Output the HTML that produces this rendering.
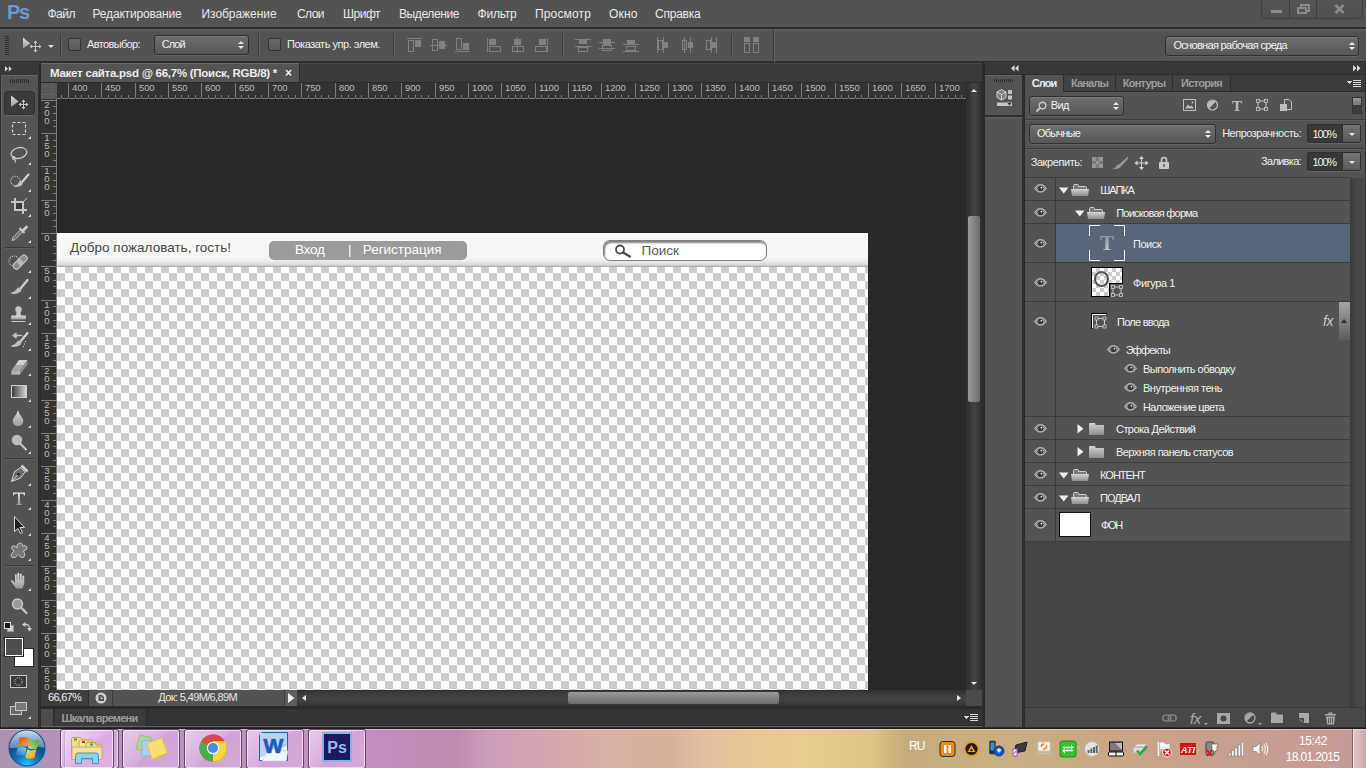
<!DOCTYPE html>
<html lang="ru">
<head>
<meta charset="utf-8">
<title>Макет сайта.psd</title>
<style>
*{box-sizing:border-box;margin:0;padding:0}
html,body{width:1366px;height:768px;overflow:hidden;background:#2c2c2c;font-family:"Liberation Sans","DejaVu Sans",sans-serif;font-size:11px;color:#e6e6e6}
.a{position:absolute}
svg{position:absolute;overflow:visible}
/* ---------- menubar ---------- */
#menubar{left:0;top:0;width:1366px;height:28px;background:#535353;border-bottom:1px solid #2e2e2e}
#menubar span{position:absolute;top:7px;font-size:12px;color:#e8e8e8;white-space:nowrap;letter-spacing:0}
#pslogo{position:absolute;left:7px;top:1px;font-size:20px;font-weight:bold;color:#6a9bd0;letter-spacing:-1.3px}
/* ---------- options bar ---------- */
#optbar{left:0;top:29px;width:1366px;height:33px;background:#535353;border-top:1px solid #626262;border-bottom:1px solid #2e2e2e}
.sep{position:absolute;width:1px;background:#3c3c3c;border-right:1px solid #626262;box-sizing:content-box}
.cb{position:absolute;width:13px;height:13px;border:1px solid #333;border-radius:2px;background:linear-gradient(#6a6a6a,#5a5a5a)}
.dd{position:absolute;border:1px solid #2f2f2f;border-radius:3px;background:linear-gradient(#6e6e6e,#575757);box-shadow:0 1px 0 #646464, inset 0 1px 0 #7c7c7c;color:#f0f0f0;white-space:nowrap}
.lbl{position:absolute;white-space:nowrap;color:#ededed}
/* ---------- toolbox ---------- */
#tooltop{left:0;top:62px;width:39px;height:13px;background:#383838}
#toolbox{left:1px;top:75px;width:37px;height:652px;background:#535353;box-shadow:inset 1px 0 0 #646464,inset 0 1px 0 #646464}
/* ---------- document window ---------- */
#docwin{left:41px;top:63px;width:941px;height:643px;background:#282828}
#tabstrip{left:0;top:0;width:941px;height:20px;background:#3a3a3a;border-bottom:1px solid #2a2a2a;box-shadow:inset 0 1px 0 #464646}
#doctab{left:0;top:0;width:259px;height:19px;background:#535353;border-right:1px solid #2e2e2e;box-shadow:inset 0 1px 0 #6a6a6a;color:#e8e8e8;font-weight:bold;font-size:12px}
#hruler{left:0;top:20px;width:925px;height:16px;background:#333}
#vruler{left:0;top:36px;width:16px;height:591px;background:#333}
#canvas{left:16px;top:36px;width:909px;height:591px;background:#282828;overflow:hidden}
#vscroll{left:925px;top:20px;width:16px;height:607px;background:#3a3a3a}
#statusbar{left:0;top:627px;width:941px;height:16px;background:#535353}

#doctitle{left:9px;top:4px;white-space:nowrap;font-size:11.5px;font-weight:bold;color:#ececec}
#docx{left:244px;top:3px;font-size:12px;font-weight:bold;color:#f0f0f0}
#rcorner{left:0;top:0;width:16px;height:16px;background:#585858;background-image:linear-gradient(90deg,#6e6e6e 1px,transparent 1px),linear-gradient(#6e6e6e 1px,transparent 1px),linear-gradient(#585858,#585858);background-size:2px 1px,1px 2px,auto;background-position:0 11px,11px 0,0 0;background-repeat:repeat-x,repeat-y,repeat}
#doc{left:0;top:134px;width:811px;height:457px;background:repeating-conic-gradient(#ccc 0% 25%,#fff 0% 50%) 0 0/16px 16px}
#dhead{left:0;top:0;width:811px;height:34px;background:linear-gradient(#f9f9f9 0,#f6f6f6 70%,#ededed 82%,#dcdcdc 92%,#c4c4c4 97%,#9c9c9c 100%)}
#welcome{left:13px;top:7px;font-size:13.5px;color:#4a4a4a;white-space:nowrap}
#pill{left:212px;top:8px;width:198px;height:19px;border-radius:5px;background:#9b9b9b;color:#fff;font-size:13.5px;white-space:nowrap}
#pill span{top:1px}
#search{left:546px;top:7px;width:164px;height:21px;border-radius:7px;border:1px solid #7e7e7e;background:#fff;box-shadow:inset 1px 2px 2px rgba(0,0,0,.5);color:#5a5a5a;font-size:13.5px}
#vthumb{left:2px;top:133px;width:12px;height:186px;border-radius:2px;background:linear-gradient(90deg,#9a9a9a,#6c6c6c)}
#vscroll{background:linear-gradient(90deg,#2c2c2c,#424242 45%,#424242 60%,#2e2e2e)}
.tri-u{width:0;height:0;border:4px solid transparent;border-top:0;border-bottom:4px solid #e8e8e8}
.tri-d{width:0;height:0;border:4px solid transparent;border-bottom:0;border-top:4px solid #e8e8e8}
.tri-r{width:0;height:0;border:4px solid transparent;border-right:0;border-left:6px solid #e8e8e8}
.tri-l{width:0;height:0;border:3px solid transparent;border-left:0;border-right:4px solid #e8e8e8}
.tri-r2{width:0;height:0;border:3px solid transparent;border-right:0;border-left:4px solid #e8e8e8}
#sbicon{left:54px;top:2px;width:13px;height:13px;border-radius:7px;background:#777}
#hscroll{left:256px;top:0;width:669px;height:16px;background:linear-gradient(#303030,#414141 40%,#414141 65%,#343434)}
#hthumb{left:271px;top:2px;width:211px;height:12px;border-radius:2px;background:linear-gradient(#9a9a9a,#6c6c6c)}
/* ---------- timeline ---------- */
#timeline{left:41px;top:708px;width:941px;height:18px;background:#343434;border-top:1px solid #2a2a2a;border-bottom:1px solid #2a2a2a}

#winctl{left:1261px;top:-1px;width:102px;height:20px;border:1px solid #404040;border-radius:0 0 4px 4px;background:linear-gradient(#555,#515151)}
#tltab{left:14px;top:0;width:92px;height:18px;background:#3b3b3b;border-right:1px solid #2c2c2c;color:#9c9c9c;font-weight:bold;font-size:11px;line-height:18px;text-align:left;padding-left:6.5px;white-space:nowrap}
/* ---------- right dock ---------- */
#docktop{left:985px;top:62px;width:381px;height:12px;background:#383838}
#iconcol{left:985px;top:75px;width:37px;height:652px;background:#535353;box-shadow:inset 0 1px 0 #626262}
#layers{left:1025px;top:75px;width:340px;height:652px;background:#535353}

#ltabs{left:0;top:0;width:340px;height:17px;background:#3c3c3c;border-bottom:1px solid #2e2e2e}
.ltab{top:0;height:16px;background:#424242;border-right:1px solid #2e2e2e;color:#9c9c9c;font-weight:bold;font-size:11px;text-align:center;line-height:16px;white-space:nowrap}
.ltab.act{background:#535353;height:17px;color:#ececec}
.hl{left:0;width:340px;height:2px;background:#3e3e3e;border-bottom:1px solid #5e5e5e}
.pct{width:54px;height:19px;border:1px solid #2f2f2f;border-radius:2px;background:#383838;color:#f0f0f0;box-shadow:0 1px 0 #646464}
.pb{left:34px;top:0;width:18px;height:17px;background:linear-gradient(#747474,#585858);border-left:1px solid #2f2f2f}
#llist{background:#454545;border-top:1px solid #3c3c3c}
.lrow{left:0;width:325px;background:#535353;border-bottom:1px solid #3c3c3c}
.lrow.sel{background:linear-gradient(90deg,#535353 0,#535353 30px,#596679 30px)}
.lt{color:#f0f0f0}
#lbot{left:0;width:340px;height:20px;background:#484848;border-top:1px solid #3a3a3a}
/* ---------- taskbar ---------- */
#taskbar{left:0;top:728px;width:1366px;height:40px;background:linear-gradient(90deg,#ab93af 0px,#b393b7 60px,#c48fc0 366px,#bf8bb0 455px,#cd9cba 487px,#d6a6b0 547px,#dab0a6 607px,#d9b09a 668px,#e4c0a0 708px,#ecc892 769px,#e8cc8e 809px,#dfc484 870px,#c4ac7c 906px,#c9b082 1000px,#c8a884 1100px,#c8a08c 1200px,#c89c94 1300px,#c89898 1366px);box-shadow:inset 0 1px 0 #1e1a1e,inset 0 2px 0 rgba(255,255,255,.38)}
.tbtn{top:1px;height:40px;border:1px solid rgba(70,45,80,.8);border-radius:3px;background:linear-gradient(135deg,rgba(255,255,255,.42) 0%,rgba(255,255,255,.12) 48%,rgba(255,255,255,0) 52%,rgba(255,255,255,.06) 100%),rgba(226,176,232,.62);box-shadow:inset 0 0 0 1px rgba(255,255,255,.55)}
.clk{font-size:12px;color:#fff;white-space:nowrap}
#showdesk{left:1352px;top:1px;width:14px;height:39px;border-left:1px solid rgba(80,60,60,.6);background:linear-gradient(90deg,rgba(255,255,255,.45),rgba(255,255,255,.15));box-shadow:inset 1px 0 0 rgba(255,255,255,.5)}
</style>
</head>
<body>
<!-- MENUBAR -->
<div id="menubar" class="a">
  <div id="pslogo">Ps</div>
  <span style="left:47.5px;letter-spacing:-0.50px">Файл</span>
  <span style="left:92.5px;letter-spacing:-0.17px">Редактирование</span>
  <span style="left:201.5px;letter-spacing:-0.05px">Изображение</span>
  <span style="left:297.0px;letter-spacing:-0.55px">Слои</span>
  <span style="left:343.0px;letter-spacing:-0.50px">Шрифт</span>
  <span style="left:399.0px;letter-spacing:-0.40px">Выделение</span>
  <span style="left:477.5px;letter-spacing:-0.22px">Фильтр</span>
  <span style="left:535.0px;letter-spacing:0.15px">Просмотр</span>
  <span style="left:609.0px;letter-spacing:0.15px">Окно</span>
  <span style="left:655.0px;letter-spacing:-0.23px">Справка</span>
  <div class="a" id="winctl"><svg style="left:0;top:0" width="102" height="19" shape-rendering="crispEdges"><rect x="9" y="10" width="11" height="3" fill="#8a8a8a"/><g fill="none" stroke="#8a8a8a" stroke-width="2"><rect x="39" y="5" width="8" height="6"/><rect x="36" y="8" width="8" height="5" fill="#535353"/></g></svg><svg style="left:72px;top:4px" width="12" height="10"><path d="M1.500 1L9.500 9M9.500 1L1.500 9" stroke="#8a8a8a" stroke-width="2.600"/></svg><i class="a" style="left:27px;top:0;width:1px;height:18px;background:#404040"></i><i class="a" style="left:54px;top:0;width:1px;height:18px;background:#404040"></i></div>
</div>
<!-- OPTIONS BAR -->
<div id="optbar" class="a">
  <svg style="left:0;top:-30px" width="12" height="70" shape-rendering="crispEdges"><rect x="5" y="36" width="4" height="1" fill="#2f2f2f"/><rect x="5" y="38" width="4" height="1" fill="#2f2f2f"/><rect x="5" y="40" width="4" height="1" fill="#2f2f2f"/><rect x="5" y="42" width="4" height="1" fill="#2f2f2f"/><rect x="5" y="44" width="4" height="1" fill="#2f2f2f"/><rect x="5" y="46" width="4" height="1" fill="#2f2f2f"/><rect x="5" y="48" width="4" height="1" fill="#2f2f2f"/><rect x="5" y="50" width="4" height="1" fill="#2f2f2f"/><rect x="5" y="52" width="4" height="1" fill="#2f2f2f"/><rect x="5" y="54" width="4" height="1" fill="#2f2f2f"/></svg>
  <svg style="left:22px;top:7px" width="20" height="15" viewBox="0 0 20 15"><path d="M1 0.500V11.500L8.300 6.500Z" fill="url(#gi)"/><g stroke="#c4c4c4" stroke-width="1" fill="none"><path d="M13.500 5.500V13.500M9.500 9.500H17.500"/></g><path d="M13.500 3.500l2 2.400h-4zM13.500 15.500l2-2.400h-4zM7.500 9.500l2.400-2v4zM19.500 9.500l-2.400-2v4z" fill="#c4c4c4"/></svg>
  <i class="a tri-d" style="left:48px;top:15px;border-width:3px 3px 0 3px;border-top-color:#dcdcdc"></i>
  <div class="sep" style="left:60px;top:4px;height:23px"></div>
  <div class="cb" style="left:68px;top:8px"></div>
  <span class="lbl" style="left:87.0px;top:8px;letter-spacing:-0.63px">Автовыбор:</span>
  <div class="dd" style="left:154px;top:5px;width:95px;height:20px"><span class="a" style="left:6.7px;top:2px;letter-spacing:-0.91px">Слой</span><i class="a tri-u" style="left:83px;top:5px;border-width:0 3px 3px 3px"></i><i class="a tri-d" style="left:83px;top:10px;border-width:3px 3px 0 3px"></i></div>
  <div class="sep" style="left:258px;top:4px;height:23px"></div>
  <div class="cb" style="left:268px;top:8px"></div>
  <span class="lbl" style="left:287.0px;top:8px;letter-spacing:-0.48px">Показать упр. элем.</span>
  <div class="sep" style="left:393px;top:4px;height:23px"></div>
  <div class="sep" style="left:562px;top:4px;height:23px"></div>
  <div class="sep" style="left:731px;top:4px;height:23px"></div>
  <div class="sep" style="left:773px;top:-1px;height:33px"></div>
  <svg style="left:0;top:-30px" width="800" height="70" shape-rendering="crispEdges"><rect x="407" y="38" width="15" height="1" fill="#808080"/><rect x="408.5" y="40.5" width="5" height="11" fill="none" stroke="#808080"/><rect x="415" y="40" width="6" height="7" fill="#808080"/><rect x="430" y="45" width="17" height="1" fill="#808080"/><rect x="432.5" y="39.5" width="5" height="11" fill="none" stroke="#808080"/><rect x="439" y="41" width="6" height="8" fill="#808080"/><rect x="455" y="51" width="15" height="1" fill="#808080"/><rect x="456.5" y="38.5" width="5" height="11" fill="none" stroke="#808080"/><rect x="463" y="43" width="6" height="7" fill="#808080"/><rect x="487" y="38" width="1" height="14" fill="#808080"/><rect x="489" y="39" width="7" height="6" fill="#808080"/><rect x="489.5" y="46.5" width="11" height="5" fill="none" stroke="#808080"/><rect x="517" y="37" width="1" height="16" fill="#808080"/><rect x="514" y="39" width="7" height="6" fill="#808080"/><rect x="512.5" y="46.5" width="11" height="5" fill="none" stroke="#808080"/><rect x="547" y="38" width="1" height="14" fill="#808080"/><rect x="539" y="39" width="7" height="6" fill="#808080"/><rect x="535.5" y="46.5" width="11" height="5" fill="none" stroke="#808080"/><rect x="575" y="39" width="16" height="1" fill="#808080"/><rect x="579" y="40" width="8" height="4" fill="#808080"/><rect x="575" y="46" width="16" height="1" fill="#808080"/><rect x="578.5" y="47.5" width="9" height="4" fill="none" stroke="#808080"/><rect x="599" y="42" width="16" height="1" fill="#808080"/><rect x="603" y="39" width="8" height="6" fill="#808080"/><rect x="599" y="48" width="16" height="1" fill="#808080"/><rect x="602.5" y="45.5" width="9" height="5" fill="none" stroke="#808080"/><rect x="623" y="44" width="16" height="1" fill="#808080"/><rect x="627" y="40" width="8" height="4" fill="#808080"/><rect x="623" y="51" width="16" height="1" fill="#808080"/><rect x="626.5" y="46.5" width="9" height="4" fill="none" stroke="#808080"/><rect x="657" y="37" width="1" height="16" fill="#808080"/><rect x="658.5" y="40.5" width="4" height="9" fill="none" stroke="#808080"/><rect x="663" y="37" width="1" height="16" fill="#808080"/><rect x="664" y="42" width="4" height="6" fill="#808080"/><rect x="684" y="37" width="1" height="16" fill="#808080"/><rect x="682.5" y="40.5" width="4" height="9" fill="none" stroke="#808080"/><rect x="690" y="37" width="1" height="16" fill="#808080"/><rect x="688" y="42" width="5" height="6" fill="#808080"/><rect x="711" y="37" width="1" height="16" fill="#808080"/><rect x="706.5" y="40.5" width="4" height="9" fill="none" stroke="#808080"/><rect x="716" y="37" width="1" height="16" fill="#808080"/><rect x="712" y="42" width="4" height="6" fill="#808080"/><rect x="744" y="37" width="6" height="5" fill="#808080"/><rect x="753" y="37" width="6" height="5" fill="#808080"/><rect x="744.5" y="43.5" width="5" height="9" fill="none" stroke="#808080"/><rect x="753.5" y="43.5" width="5" height="9" fill="none" stroke="#808080"/></svg>
  <div class="dd" style="left:1165px;top:6px;width:194px;height:20px"><span class="a" style="left:7.4px;top:2px;letter-spacing:-0.68px">Основная рабочая среда</span><i class="a tri-u" style="left:183px;top:5px;border-width:0 3px 3px 3px"></i><i class="a tri-d" style="left:183px;top:10px;border-width:3px 3px 0 3px"></i></div>
</div>
<!-- TOOLBOX -->
<div id="tooltop" class="a"></div>
<div id="toolbox" class="a"><svg id="tools" style="left:-1px;top:-75px" width="40" height="768"><defs><linearGradient id="gi" x1="0" y1="0" x2="0" y2="1"><stop offset="0" stop-color="#dedede"/><stop offset="1" stop-color="#9a9a9a"/></linearGradient><linearGradient id="gg" x1="0" y1="0" x2="1" y2="0"><stop offset="0" stop-color="#3a3a3a"/><stop offset="1" stop-color="#d8d8d8"/></linearGradient></defs><path d="M5 66v5.500l3-2.750zM8.800 66v5.500l3-2.750z" fill="#d8d8d8"/><rect x="10" y="79" width="1" height="4" fill="#2e2e2e"/><rect x="12" y="79" width="1" height="4" fill="#2e2e2e"/><rect x="14" y="79" width="1" height="4" fill="#2e2e2e"/><rect x="16" y="79" width="1" height="4" fill="#2e2e2e"/><rect x="18" y="79" width="1" height="4" fill="#2e2e2e"/><rect x="20" y="79" width="1" height="4" fill="#2e2e2e"/><rect x="22" y="79" width="1" height="4" fill="#2e2e2e"/><rect x="24" y="79" width="1" height="4" fill="#2e2e2e"/><rect x="26" y="79" width="1" height="4" fill="#2e2e2e"/><rect x="28" y="79" width="1" height="4" fill="#2e2e2e"/><rect x="4.500" y="91.500" width="30" height="23" rx="3" fill="#3b3b3b" stroke="#303030"/><path d="M6 115.500h27" stroke="#666"/><path d="M11 95.500V107L18.500 101.500Z" fill="url(#gi)"/><path d="M23.500 101.500v6M20.500 104.500h6" stroke="#c4c4c4" fill="none"/><path d="M23.500 99.500l2 2.500h-4zM23.500 109.500l2-2.500h-4zM18.500 104.500l2.500-2v4zM28.500 104.500l-2.500-2v4z" fill="#c4c4c4"/><rect x="12.500" y="122.500" width="13" height="12" fill="none" stroke="#d4d4d4" stroke-width="1.200" stroke-dasharray="3 2"/><path d="M31 136v3h-3z" fill="#d6d6d6"/><g fill="none" stroke="#c8c8c8" stroke-width="1.300"><ellipse cx="19" cy="153" rx="8" ry="5.300" transform="rotate(-14 19 153)"/><circle cx="13.800" cy="158" r="1.300"/><path d="M14.500 159.300Q16 160.500 15 162.500"/></g><path d="M31 162v3h-3z" fill="#d6d6d6"/><circle cx="15.500" cy="181" r="4.700" fill="none" stroke="#d8d8d8" stroke-width="1.100" stroke-dasharray="1 1.300"/><path d="M28.500 174.500L22 182" stroke="#cfcfcf" stroke-width="2.200" stroke-linecap="round"/><path d="M22.500 181.500Q24 185 19 186.500Q15.500 187.500 13.500 186.500Q18 185 19.500 181Z" fill="#bdbdbd"/><path d="M31 189v3h-3z" fill="#d6d6d6"/><rect x="16" y="203" width="7" height="7" fill="#3a3a3a"/><path d="M15 198v12h12M11 202h12v12" fill="none" stroke="#c4c4c4" stroke-width="2"/><path d="M23.500 201.500L27 198" stroke="#c4c4c4"/><path d="M31 214v3h-3z" fill="#d6d6d6"/><path d="M12.300 240.500L13 237.500L21 229.500L23 231.500L15 239.500Z" fill="#6e6e6e" stroke="#d4d4d4" stroke-width="0.900"/><path d="M19.500 228l5 5" stroke="#c8c8c8" stroke-width="2"/><path d="M22 229.500L25 226.500Q26.500 225 27.500 226T27 228.500L24 231.500Z" fill="#cfcfcf"/><path d="M31 240v3h-3z" fill="#d6d6d6"/><path d="M5 247.500h29" stroke="#3a3a3a"/><path d="M5 248.500h29" stroke="#5f5f5f"/><circle cx="14" cy="261" r="5" fill="none" stroke="#d8d8d8" stroke-width="1.100" stroke-dasharray="1 1.300"/><g transform="rotate(-45 20 262)"><rect x="11.500" y="259" width="17" height="6.500" rx="3.200" fill="#8a8a8a" stroke="#c9c9c9"/><rect x="17.500" y="259.500" width="5" height="5.500" fill="#b8b8b8"/></g><path d="M31 270v3h-3z" fill="#d6d6d6"/><path d="M27.5 280L20.5 288.5" stroke="#cfcfcf" stroke-width="2.200" stroke-linecap="round"/><path d="M21 288Q22.5 292 17 293.5Q13 294.5 10.5 293Q15.5 291.5 18 287.5Z" fill="#c0c0c0"/><path d="M31 296v3h-3z" fill="#d6d6d6"/><circle cx="18.500" cy="309.500" r="3.200" fill="#c6c6c6"/><path d="M16.500 311h4l0.500 5h-5z" fill="#c6c6c6"/><rect x="11" y="315.500" width="15" height="4" rx="1" fill="url(#gi)"/><path d="M11.500 321.500h14" stroke="#c6c6c6"/><path d="M31 322v3h-3z" fill="#d6d6d6"/><path d="M27.5 333L20.5 341.5" stroke="#cfcfcf" stroke-width="2.200" stroke-linecap="round"/><path d="M21 341Q22.5 345 17 346.5Q13 347.5 10.5 346Q15.5 344.5 18 340.5Z" fill="#c0c0c0"/><path d="M12 335.500L16.500 332V334.500Q21.500 334 24 336.500Q20.500 335.500 16.500 336.700V339Z" fill="#c0c0c0"/><path d="M23.500 346v1M24.500 343.500v1M25.500 341v1" stroke="#ddd"/><path d="M31 348v3h-3z" fill="#d6d6d6"/><path d="M11.500 370.500L15 365.500H23.500L20 370.500Z" fill="#a8a8a8"/><path d="M15 365.500L19 360H27.500L23.500 365.500Z" fill="#d0d0d0"/><path d="M23.500 365.500L27.500 360V364.500L20 374.500H11.500V370.500H20Z" fill="#8e8e8e"/><path d="M11.500 370.500H20V374.500H11.500Z" fill="#b4b4b4"/><path d="M31 373v3h-3z" fill="#d6d6d6"/><rect x="11.500" y="385.500" width="15" height="12" fill="url(#gg)" stroke="#cfcfcf"/><path d="M31 399v3h-3z" fill="#d6d6d6"/><path d="M18 410Q19 413.500 22 417.500A5.300 5.300 0 1 1 14 417.500Q17 413.500 18 410Z" fill="url(#gi)"/><path d="M31 425v3h-3z" fill="#d6d6d6"/><circle cx="17" cy="440" r="5.200" fill="#bcbcbc"/><path d="M20.500 444L26 449.500" stroke="#c8c8c8" stroke-width="2" stroke-linecap="round"/><path d="M31 451v3h-3z" fill="#d6d6d6"/><path d="M5 458.500h29" stroke="#3a3a3a"/><path d="M5 459.500h29" stroke="#5f5f5f"/><path d="M11.500 481.500L14.500 471.500L21 467.500L25 472L20.500 478Z" fill="#6a6a6a" stroke="#d4d4d4" stroke-width="1"/><path d="M11.500 481.500L18 474.500" stroke="#d4d4d4"/><circle cx="18.300" cy="474.300" r="1.300" fill="#1e1e1e"/><path d="M21.500 465.500L27.500 471.500" stroke="#d0d0d0" stroke-width="2.600"/><path d="M31 483v3h-3z" fill="#d6d6d6"/><path d="M13 492.500h12v3h-1q0-1.700-2-1.700h-2v9.200q0 1 1.500 1v1h-5v-1q1.500 0 1.500-1v-9.200h-2q-2 0-2 1.700h-1z" fill="url(#gi)"/><path d="M31 507v3h-3z" fill="#d6d6d6"/><path d="M14.500 516.500V531.500L18 528.500L20.500 533.500L22.500 532.500L20 527.500H24.500Z" fill="#1e1e1e" stroke="#d8d8d8" stroke-width="1"/><path d="M31 533v3h-3z" fill="#d6d6d6"/><path d="M19 543.500Q22.500 542 22.500 546Q25.500 544.500 27 547Q27.500 550 23.500 551Q26.500 555 23.500 557.500Q20.500 558.500 18.500 554.500Q15.500 558.500 12 557.500Q9.500 555 14 551Q10 548.500 12.500 546Q15.500 545 17 548Q16 544.500 19 543.500Z" fill="#787878" stroke="#c4c4c4" stroke-width="1"/><path d="M31 558v3h-3z" fill="#d6d6d6"/><path d="M5 565.500h29" stroke="#3a3a3a"/><path d="M5 566.500h29" stroke="#5f5f5f"/><path d="M15 587L11 581.500Q10.500 580 12 580L15 582.500V575Q15.700 573.500 16.700 575V579.500H17.300V573.500Q18.200 572 19.200 573.500V579.500H19.800V574Q20.700 572.800 21.700 574V580H22.300V576Q23.200 574.800 24.200 576V584L22.500 588.500H16Z" fill="url(#gi)"/><path d="M31 588v3h-3z" fill="#d6d6d6"/><circle cx="17.500" cy="604" r="5" fill="#9a9a9a" stroke="#cacaca" stroke-width="1.400"/><path d="M21.500 608L26.500 613" stroke="#c4c4c4" stroke-width="2.400" stroke-linecap="round"/><rect x="7.500" y="625.500" width="6" height="6" fill="#cfcfcf" stroke="#9a9a9a"/><rect x="4.500" y="622.500" width="6" height="6" fill="#1a1a1a" stroke="#d8d8d8"/><path d="M25 624.500Q29.500 624 29.500 628.500" fill="none" stroke="#d0d0d0" stroke-width="1.200"/><path d="M22 624.500l3.500-2.500v5zM29.500 631.500l-2.500-3.500h5z" fill="#d0d0d0"/><rect x="14.500" y="648.500" width="19" height="18" fill="#fff" stroke="#2a2a2a"/><rect x="4.500" y="637.500" width="19" height="19" fill="#fff" stroke="#2a2a2a"/><rect x="6" y="639" width="16" height="16" fill="#4d4d4d"/><rect x="10.500" y="675.500" width="16" height="12" fill="#3a3a3a" stroke="#c8c8c8"/><circle cx="18.500" cy="681.500" r="3.700" fill="none" stroke="#e0e0e0" stroke-width="1" stroke-dasharray="1 1.200"/><rect x="10.500" y="706.500" width="11" height="8" fill="#6a6a6a" stroke="#c8c8c8"/><rect x="15.500" y="702.500" width="11" height="8" fill="#787878" stroke="#c8c8c8"/><path d="M31 716v3h-3z" fill="#d6d6d6"/></svg></div>
<!-- DOCUMENT WINDOW -->
<div id="docwin" class="a">
  <div id="tabstrip" class="a"><div id="doctab" class="a"><span class="a" id="doctitle" style=";letter-spacing:-0.26px">Макет сайта.psd @ 66,7% (Поиск, RGB/8) *</span><span class="a" id="docx">×</span></div></div>
  <div id="hruler" class="a"><svg id="hr" style="left:0;top:0" width="925" height="16" shape-rendering="crispEdges">
<path fill="#7c7c7c" d="M16 15h909v1h-909zM20 12v4h1v-4zM27 0v16h1v-16zM34 12v4h1v-4zM40 12v4h1v-4zM47 12v4h1v-4zM54 12v4h1v-4zM60 0v16h1v-16zM67 12v4h1v-4zM74 12v4h1v-4zM80 12v4h1v-4zM87 12v4h1v-4zM94 0v16h1v-16zM100 12v4h1v-4zM107 12v4h1v-4zM114 12v4h1v-4zM120 12v4h1v-4zM127 0v16h1v-16zM134 12v4h1v-4zM140 12v4h1v-4zM147 12v4h1v-4zM154 12v4h1v-4zM160 0v16h1v-16zM167 12v4h1v-4zM174 12v4h1v-4zM180 12v4h1v-4zM187 12v4h1v-4zM194 0v16h1v-16zM200 12v4h1v-4zM207 12v4h1v-4zM214 12v4h1v-4zM220 12v4h1v-4zM227 0v16h1v-16zM234 12v4h1v-4zM240 12v4h1v-4zM247 12v4h1v-4zM254 12v4h1v-4zM260 0v16h1v-16zM267 12v4h1v-4zM274 12v4h1v-4zM280 12v4h1v-4zM287 12v4h1v-4zM294 0v16h1v-16zM300 12v4h1v-4zM307 12v4h1v-4zM314 12v4h1v-4zM320 12v4h1v-4zM327 0v16h1v-16zM334 12v4h1v-4zM340 12v4h1v-4zM347 12v4h1v-4zM354 12v4h1v-4zM360 0v16h1v-16zM367 12v4h1v-4zM374 12v4h1v-4zM380 12v4h1v-4zM387 12v4h1v-4zM394 0v16h1v-16zM400 12v4h1v-4zM407 12v4h1v-4zM414 12v4h1v-4zM420 12v4h1v-4zM427 0v16h1v-16zM434 12v4h1v-4zM440 12v4h1v-4zM447 12v4h1v-4zM454 12v4h1v-4zM460 0v16h1v-16zM467 12v4h1v-4zM474 12v4h1v-4zM480 12v4h1v-4zM487 12v4h1v-4zM494 0v16h1v-16zM500 12v4h1v-4zM507 12v4h1v-4zM514 12v4h1v-4zM520 12v4h1v-4zM527 0v16h1v-16zM534 12v4h1v-4zM540 12v4h1v-4zM547 12v4h1v-4zM554 12v4h1v-4zM560 0v16h1v-16zM567 12v4h1v-4zM574 12v4h1v-4zM580 12v4h1v-4zM587 12v4h1v-4zM594 0v16h1v-16zM600 12v4h1v-4zM607 12v4h1v-4zM614 12v4h1v-4zM620 12v4h1v-4zM627 0v16h1v-16zM634 12v4h1v-4zM640 12v4h1v-4zM647 12v4h1v-4zM654 12v4h1v-4zM660 0v16h1v-16zM667 12v4h1v-4zM674 12v4h1v-4zM680 12v4h1v-4zM687 12v4h1v-4zM694 0v16h1v-16zM700 12v4h1v-4zM707 12v4h1v-4zM714 12v4h1v-4zM720 12v4h1v-4zM727 0v16h1v-16zM734 12v4h1v-4zM740 12v4h1v-4zM747 12v4h1v-4zM754 12v4h1v-4zM760 0v16h1v-16zM767 12v4h1v-4zM774 12v4h1v-4zM780 12v4h1v-4zM787 12v4h1v-4zM794 0v16h1v-16zM800 12v4h1v-4zM807 12v4h1v-4zM814 12v4h1v-4zM820 12v4h1v-4zM827 0v16h1v-16zM834 12v4h1v-4zM840 12v4h1v-4zM847 12v4h1v-4zM854 12v4h1v-4zM860 0v16h1v-16zM867 12v4h1v-4zM874 12v4h1v-4zM880 12v4h1v-4zM887 12v4h1v-4zM894 0v16h1v-16zM900 12v4h1v-4zM907 12v4h1v-4zM914 12v4h1v-4zM920 12v4h1v-4z"/>
<g font-size="9.5" fill="#b9b9b9" letter-spacing="-0.15" font-family="Liberation Sans, sans-serif">
<text x="31" y="7.8">400</text>
<text x="64" y="7.8">450</text>
<text x="98" y="7.8">500</text>
<text x="131" y="7.8">550</text>
<text x="164" y="7.8">600</text>
<text x="198" y="7.8">650</text>
<text x="231" y="7.8">700</text>
<text x="264" y="7.8">750</text>
<text x="298" y="7.8">800</text>
<text x="331" y="7.8">850</text>
<text x="364" y="7.8">900</text>
<text x="398" y="7.8">950</text>
<text x="431" y="7.8">1000</text>
<text x="464" y="7.8">1050</text>
<text x="498" y="7.8">1100</text>
<text x="531" y="7.8">1150</text>
<text x="564" y="7.8">1200</text>
<text x="598" y="7.8">1250</text>
<text x="631" y="7.8">1300</text>
<text x="664" y="7.8">1350</text>
<text x="698" y="7.8">1400</text>
<text x="731" y="7.8">1450</text>
<text x="764" y="7.8">1500</text>
<text x="798" y="7.8">1550</text>
<text x="831" y="7.8">1600</text>
<text x="864" y="7.8">1650</text>
<text x="898" y="7.8">1700</text>
</g></svg><div id="rcorner" class="a"></div></div>
  <div id="vruler" class="a"><svg id="vr" style="left:0;top:0" width="16" height="591" shape-rendering="crispEdges">
<path fill="#7c7c7c" d="M15 0h1v591h-1zM0 1h16v1h-16zM12 7h4v1h-4zM12 14h4v1h-4zM12 21h4v1h-4zM12 27h4v1h-4zM0 34h16v1h-16zM12 41h4v1h-4zM12 47h4v1h-4zM12 54h4v1h-4zM12 61h4v1h-4zM0 67h16v1h-16zM12 74h4v1h-4zM12 81h4v1h-4zM12 87h4v1h-4zM12 94h4v1h-4zM0 101h16v1h-16zM12 107h4v1h-4zM12 114h4v1h-4zM12 121h4v1h-4zM12 127h4v1h-4zM0 134h16v1h-16zM12 141h4v1h-4zM12 147h4v1h-4zM12 154h4v1h-4zM12 161h4v1h-4zM0 167h16v1h-16zM12 174h4v1h-4zM12 181h4v1h-4zM12 187h4v1h-4zM12 194h4v1h-4zM0 201h16v1h-16zM12 207h4v1h-4zM12 214h4v1h-4zM12 221h4v1h-4zM12 227h4v1h-4zM0 234h16v1h-16zM12 241h4v1h-4zM12 247h4v1h-4zM12 254h4v1h-4zM12 261h4v1h-4zM0 267h16v1h-16zM12 274h4v1h-4zM12 281h4v1h-4zM12 287h4v1h-4zM12 294h4v1h-4zM0 301h16v1h-16zM12 307h4v1h-4zM12 314h4v1h-4zM12 321h4v1h-4zM12 327h4v1h-4zM0 334h16v1h-16zM12 341h4v1h-4zM12 347h4v1h-4zM12 354h4v1h-4zM12 361h4v1h-4zM0 367h16v1h-16zM12 374h4v1h-4zM12 381h4v1h-4zM12 387h4v1h-4zM12 394h4v1h-4zM0 401h16v1h-16zM12 407h4v1h-4zM12 414h4v1h-4zM12 421h4v1h-4zM12 427h4v1h-4zM0 434h16v1h-16zM12 441h4v1h-4zM12 447h4v1h-4zM12 454h4v1h-4zM12 461h4v1h-4zM0 467h16v1h-16zM12 474h4v1h-4zM12 481h4v1h-4zM12 487h4v1h-4zM12 494h4v1h-4zM0 501h16v1h-16zM12 507h4v1h-4zM12 514h4v1h-4zM12 521h4v1h-4zM12 527h4v1h-4zM0 534h16v1h-16zM12 541h4v1h-4zM12 547h4v1h-4zM12 554h4v1h-4zM12 561h4v1h-4zM0 567h16v1h-16zM12 574h4v1h-4zM12 581h4v1h-4zM12 587h4v1h-4z"/>
<g font-size="9.5" fill="#b9b9b9" text-anchor="middle" font-family="Liberation Sans, sans-serif">
<text x="6" y="9">2</text>
<text x="6" y="17">0</text>
<text x="6" y="25">0</text>
<text x="6" y="42">1</text>
<text x="6" y="50">5</text>
<text x="6" y="58">0</text>
<text x="6" y="75">1</text>
<text x="6" y="83">0</text>
<text x="6" y="91">0</text>
<text x="6" y="109">5</text>
<text x="6" y="117">0</text>
<text x="6" y="142">0</text>
<text x="6" y="175">5</text>
<text x="6" y="183">0</text>
<text x="6" y="209">1</text>
<text x="6" y="217">0</text>
<text x="6" y="225">0</text>
<text x="6" y="242">1</text>
<text x="6" y="250">5</text>
<text x="6" y="258">0</text>
<text x="6" y="275">2</text>
<text x="6" y="283">0</text>
<text x="6" y="291">0</text>
<text x="6" y="309">2</text>
<text x="6" y="317">5</text>
<text x="6" y="325">0</text>
<text x="6" y="342">3</text>
<text x="6" y="350">0</text>
<text x="6" y="358">0</text>
<text x="6" y="375">3</text>
<text x="6" y="383">5</text>
<text x="6" y="391">0</text>
<text x="6" y="409">4</text>
<text x="6" y="417">0</text>
<text x="6" y="425">0</text>
<text x="6" y="442">4</text>
<text x="6" y="450">5</text>
<text x="6" y="458">0</text>
<text x="6" y="475">5</text>
<text x="6" y="483">0</text>
<text x="6" y="491">0</text>
<text x="6" y="509">5</text>
<text x="6" y="517">5</text>
<text x="6" y="525">0</text>
<text x="6" y="542">6</text>
<text x="6" y="550">0</text>
<text x="6" y="558">0</text>
<text x="6" y="575">6</text>
<text x="6" y="583">5</text>
<text x="6" y="591">0</text>
</g></svg></div>
  <div id="canvas" class="a">
    <div id="doc" class="a">
      <div id="dhead" class="a">
        <span class="a" id="welcome" style=";letter-spacing:0.01px">Добро пожаловать, гость!</span>
        <div class="a" id="pill"><span class="a" style="left:26.0px;letter-spacing:-0.19px">Вход</span><span class="a" style="left:79px">|</span><span class="a" style="left:93.8px;letter-spacing:-0.02px">Регистрация</span></div>
        <div class="a" id="search"><svg style="left:10px;top:3px" width="18" height="14" viewBox="0 0 18 14"><circle cx="6" cy="5.5" r="4" fill="none" stroke="#4d4d4d" stroke-width="1.8"/><path d="M9 8.5L16 12.5" stroke="#4d4d4d" stroke-width="2.4" stroke-linecap="round"/></svg><span class="a" style="left:37.4px;top:2px;letter-spacing:0.04px">Поиск</span></div>
      </div>
    </div>
  </div>
  <div id="vscroll" class="a"><div id="vthumb" class="a"></div><i class="a tri-u" style="left:5px;top:6px;border-width:0 3px 3px 3px"></i><i class="a tri-d" style="left:5px;top:599px;border-width:3px 3px 0 3px"></i></div>
  <div id="statusbar" class="a">
    <div class="a" style="left:0;top:0;width:48px;height:16px;background:#3d3d3d;border-right:1px solid #2e2e2e"></div>
    <span class="a" style="left:7.0px;top:1px;color:#f0f0f0;letter-spacing:-0.72px">66,67%</span>
    <svg style="left:54px;top:2px" width="12" height="12"><circle cx="6" cy="6" r="5.500" fill="#d0d0d0"/><path d="M3.500 3H7L9 5V9H3.500Z" fill="#535353"/><path d="M6 4.500V6.500H8" fill="none" stroke="#d0d0d0"/></svg>
    <div class="a" style="left:71px;top:0;width:1px;height:16px;background:#3e3e3e"></div>
    <span class="a" style="left:117.3px;top:1px;color:#e8e8e8;letter-spacing:-0.63px">Док: 5,49M/6,89M</span>
    <div class="a" style="left:243px;top:0;width:13px;height:16px;background:#5e5e5e;border-left:1px solid #3e3e3e"><svg style="left:3px;top:3px" width="7" height="10"><path d="M0 0V10L6.500 5Z" fill="#f0f0f0"/></svg></div>
    <div class="a" id="hscroll"><i class="a tri-l" style="left:5px;top:5px"></i><div id="hthumb" class="a"></div><i class="a tri-r2" style="left:660px;top:5px"></i></div>
    <div class="a" style="left:925px;top:0;width:16px;height:16px;background:#4a4a4a"></div>
  </div>
</div>
<div id="timeline" class="a"><div class="a" style="left:0;top:0;width:13px;height:18px;background:#4c4c4c;border-right:1px solid #2c2c2c"></div><div class="a" id="tltab"><span style=";letter-spacing:-0.77px">Шкала времени</span></div><svg style="left:923px;top:5px" width="15" height="8" shape-rendering="crispEdges"><path d="M0 2h5l-2.500 3z" fill="#d8d8d8"/><path d="M6 0h8v1h-8zM6 2h8v1h-8zM6 4h8v1h-8zM6 6h8v1h-8z" fill="#d8d8d8"/></svg></div>
<!-- RIGHT DOCK -->
<div id="docktop" class="a"><svg style="left:26px;top:3px" width="8" height="7"><path d="M3.500 0v6.500l-3.500-3.250zM7.500 0v6.500l-3.500-3.250z" fill="#dcdcdc"/></svg><svg style="left:368px;top:3px" width="8" height="7"><path d="M0 0v6.500l3.500-3.250zM4 0v6.500l3.500-3.250z" fill="#dcdcdc"/></svg></div>
<div id="iconcol" class="a"><svg style="left:0;top:0" width="37" height="42"><rect x="9" y="4" width="1" height="3" fill="#2e2e2e"/><rect x="11" y="4" width="1" height="3" fill="#2e2e2e"/><rect x="13" y="4" width="1" height="3" fill="#2e2e2e"/><rect x="15" y="4" width="1" height="3" fill="#2e2e2e"/><rect x="17" y="4" width="1" height="3" fill="#2e2e2e"/><rect x="19" y="4" width="1" height="3" fill="#2e2e2e"/><rect x="21" y="4" width="1" height="3" fill="#2e2e2e"/><rect x="23" y="4" width="1" height="3" fill="#2e2e2e"/><rect x="25" y="4" width="1" height="3" fill="#2e2e2e"/><rect x="27" y="4" width="1" height="3" fill="#2e2e2e"/><path d="M9 19.500h19" stroke="#676767" stroke-dasharray="1 1" shape-rendering="crispEdges" opacity="0"/><g stroke="#cfcfcf" stroke-width="1" fill="#7d7d7d"><path d="M16.500 14.500L21 17V22.500L16.500 25L12 22.500V17Z"/><path d="M12 17L16.500 19.500L21 17M16.500 19.500V25" fill="none"/></g><rect x="23" y="15" width="4" height="4" fill="#c4c4c4"/><rect x="23" y="20.500" width="4" height="4" fill="#c4c4c4"/><rect x="12" y="27.500" width="15" height="3.500" fill="#c4c4c4"/><path d="M22.500 28h4l-2 2.500z" fill="#2a2a2a"/></svg><div class="a" style="left:0;top:40px;width:37px;height:2px;background:#2e2e2e;border-bottom:1px solid #626262;box-sizing:content-box"></div></div>
<div id="layers" class="a">
<svg width="0" height="0" style="left:0;top:0"><defs>
<linearGradient id="gfold" x1="0" y1="0" x2="0" y2="1"><stop offset="0" stop-color="#d4d4d4"/><stop offset="1" stop-color="#8c8c8c"/></linearGradient>
<linearGradient id="gT" x1="0" y1="0" x2="0" y2="1"><stop offset="0" stop-color="#7f8894"/><stop offset="1" stop-color="#c9ccd2"/></linearGradient>
<symbol id="eye" viewBox="0 0 13 9" overflow="visible"><path d="M0.5 4.5C2.5 1.3 4.6 0.6 6.5 0.6S10.5 1.3 12.5 4.5C10.5 7.4 8.4 8.1 6.5 8.1S2.5 7.4 0.5 4.5Z" fill="#8f8f8f" stroke="#c0c0c0" stroke-width="1"/><circle cx="6.5" cy="4.4" r="2.7" fill="#3a3a3a"/><circle cx="7.4" cy="3.6" r="0.9" fill="#e6e6e6"/></symbol>
<symbol id="fopen" viewBox="0 0 18 12" overflow="visible"><path d="M2.5 6V1.5Q2.5 0.5 3.5 0.5H6.5Q7.5 0.5 7.5 1.5V2.5H14.5Q15.5 2.5 15.5 3.5V6" fill="#7a7a7a" stroke="#cfcfcf"/><path d="M0 5H18L17 12H1Z" fill="url(#gfold)"/></symbol>
<symbol id="fclosed" viewBox="0 0 15 12" overflow="visible"><path d="M0 1Q0 0 1 0H5.5Q6.5 0 6.5 1V2H14Q15 2 15 3V12H0Z" fill="url(#gfold)"/></symbol>
<symbol id="shp" viewBox="0 0 12 12" overflow="visible"><rect x="2" y="2" width="8" height="8" fill="none" stroke="#c8c8c8"/><g fill="#5a5a5a" stroke="#c8c8c8" stroke-width="0.8"><rect x="0.5" y="0.5" width="3" height="3"/><rect x="8.5" y="0.5" width="3" height="3"/><rect x="0.5" y="8.5" width="3" height="3"/><rect x="8.5" y="8.5" width="3" height="3"/></g></symbol>
</defs></svg>
<div class="a" id="ltabs"><div class="a ltab act" style="left:0;width:39px"><span style=";letter-spacing:-0.95px">Слои</span></div><div class="a ltab" style="left:39px;width:52px"><span style=";letter-spacing:-0.85px">Каналы</span></div><div class="a ltab" style="left:91px;width:57px"><span style=";letter-spacing:-0.75px">Контуры</span></div><div class="a ltab" style="left:148px;width:58px"><span style=";letter-spacing:-0.68px">История</span></div>
<svg style="left:322px;top:5px" width="15" height="8" shape-rendering="crispEdges"><path d="M0 1h5l-2.5 3z" fill="#d8d8d8"/><path d="M6 0h8v1h-8zM6 2h8v1h-8zM6 4h8v1h-8zM6 6h8v1h-8z" fill="#d8d8d8"/></svg></div>
<div class="dd" style="left:4px;top:21px;width:95px;height:20px"><svg style="left:6px;top:4px" width="11" height="11" viewBox="0 0 11 11"><circle cx="6.5" cy="4.5" r="3.3" fill="none" stroke="#c8c8c8" stroke-width="1.4"/><path d="M4 7L1 10" stroke="#c8c8c8" stroke-width="1.8" stroke-linecap="round"/></svg><span class="a" style="left:20.8px;top:2px;letter-spacing:-0.67px">Вид</span><i class="a tri-u" style="left:83px;top:5px;border-width:0 3px 3px 3px"></i><i class="a tri-d" style="left:83px;top:10px;border-width:3px 3px 0 3px"></i></div>
<svg style="left:158px;top:24px" width="112" height="13"><rect x="0.5" y="0.5" width="12" height="11" fill="none" stroke="#bdbdbd"/><path d="M2 9.5L5 5.5L7 7.5L8.5 6.5L11 9.5Z" fill="#bdbdbd"/><circle cx="9.5" cy="3.5" r="1" fill="#bdbdbd"/><circle cx="29.5" cy="6" r="5" fill="none" stroke="#bdbdbd" stroke-width="1.2"/><path d="M26 9.5A5 5 0 0 1 33 2.5Z" fill="#bdbdbd"/><text x="54" y="11.5" text-anchor="middle" font-family="Liberation Serif, serif" font-weight="bold" font-size="15" fill="#bdbdbd">T</text><use href="#shp" x="73" y="0" width="12" height="12"/><path d="M101.5 0.5H106L108.5 3V10.5H101.5Z" fill="none" stroke="#bdbdbd"/><rect x="97" y="5" width="7" height="7" fill="#bdbdbd"/></svg>
<div class="a" style="left:327px;top:22px;width:10px;height:17px;border:1px solid #333;background:linear-gradient(#9a9a9a 0,#777 47%,#3a3a3a 50%,#3f3f3f 100%)"></div>
<div class="a hl" style="top:44px"></div>
<div class="dd" style="left:4px;top:49px;width:187px;height:20px"><span class="a" style="left:7.0px;top:2px;letter-spacing:-0.80px">Обычные</span><i class="a tri-u" style="left:175px;top:5px;border-width:0 3px 3px 3px"></i><i class="a tri-d" style="left:175px;top:10px;border-width:3px 3px 0 3px"></i></div>
<span class="lbl" style="left:197.2px;top:52px;letter-spacing:-0.51px">Непрозрачность:</span>
<div class="a pct" style="left:282px;top:49px"><span class="a" style="left:4.5px;top:3px;letter-spacing:-1.16px">100%</span><div class="a pb"><i class="a tri-d" style="left:6px;top:8px;border-width:3px 3px 0 3px"></i></div></div>
<div class="a hl" style="top:73px"></div>
<span class="lbl" style="left:5.7px;top:81px;letter-spacing:-0.42px">Закрепить:</span>
<svg style="left:67px;top:81px" width="80" height="14"><rect x="0" y="1" width="11" height="11" fill="#7a7a7a"/><path d="M0 1h4v4h-4zM7 1h4v4h-4zM4 5h3v3h-3zM0 8h4v4h-4zM7 8h4v4h-4z" fill="#969696"/><path d="M35.500 1L36.500 2L29 10.500L27 8.500Z" fill="#9a9a9a"/><path d="M27 8.500L29 10.500Q27.500 13.500 20.500 12.800Q24.500 11.500 24.500 9.500Q25.500 8 27 8.500Z" fill="#9a9a9a"/><g stroke="#d2d2d2" fill="none"><path d="M49.5 2V12M44.5 7H54.5"/></g><path d="M49.5 0l2.5 3h-5zM49.5 14l2.5-3h-5zM42.5 7l3-2.5v5zM56.5 7l-3-2.5v5z" fill="#d2d2d2"/><path d="M69.5 6V4A2.5 2.5 0 0 1 74.500 4V6" fill="none" stroke="#c8c8c8" stroke-width="1.6"/><rect x="67" y="6" width="10" height="7" rx="1" fill="#c8c8c8"/><rect x="71.300" y="8" width="1.4" height="3" fill="#555"/></svg>
<span class="lbl" style="left:236.0px;top:80px;letter-spacing:-0.68px">Заливка:</span>
<div class="a pct" style="left:282px;top:77px"><span class="a" style="left:4.5px;top:3px;letter-spacing:-1.16px">100%</span><div class="a pb"><i class="a tri-d" style="left:6px;top:8px;border-width:3px 3px 0 3px"></i></div></div>
<div class="a" id="llist" style="left:0;top:102px;width:325px;height:530px"></div>
<div class="a" style="left:325px;top:103px;width:15px;height:529px;background:linear-gradient(90deg,#3b3b3b,#454545 40%,#494949)"></div>
<div class="a lrow" style="top:103px;height:23px"></div>
<div class="a lrow" style="top:126px;height:23px"></div>
<div class="a lrow sel" style="top:149px;height:39px"></div>
<div class="a lrow" style="top:188px;height:39px"></div>
<div class="a lrow" style="top:227px;height:115px"></div>
<div class="a lrow" style="top:342px;height:23px"></div>
<div class="a lrow" style="top:365px;height:23px"></div>
<div class="a lrow" style="top:388px;height:23px"></div>
<div class="a lrow" style="top:411px;height:23px"></div>
<div class="a lrow" style="top:434px;height:33px"></div>
<div class="a" style="left:30px;top:103px;width:1px;height:363px;background:#3c3c3c"></div>
<svg style="left:8.5px;top:109.0px" width="13" height="9"><use href="#eye" width="13" height="9"/></svg>
<svg style="left:8.5px;top:132.5px" width="13" height="9"><use href="#eye" width="13" height="9"/></svg>
<svg style="left:8.5px;top:163.5px" width="13" height="9"><use href="#eye" width="13" height="9"/></svg>
<svg style="left:8.5px;top:202.5px" width="13" height="9"><use href="#eye" width="13" height="9"/></svg>
<svg style="left:8.5px;top:241.5px" width="13" height="9"><use href="#eye" width="13" height="9"/></svg>
<svg style="left:8.5px;top:349.0px" width="13" height="9"><use href="#eye" width="13" height="9"/></svg>
<svg style="left:8.5px;top:372.0px" width="13" height="9"><use href="#eye" width="13" height="9"/></svg>
<svg style="left:8.5px;top:395.0px" width="13" height="9"><use href="#eye" width="13" height="9"/></svg>
<svg style="left:8.5px;top:418.0px" width="13" height="9"><use href="#eye" width="13" height="9"/></svg>
<svg style="left:8.5px;top:445.0px" width="13" height="9"><use href="#eye" width="13" height="9"/></svg>
<svg style="left:82px;top:270.0px" width="13" height="9"><use href="#eye" width="13" height="9"/></svg>
<svg style="left:99px;top:289.0px" width="13" height="9"><use href="#eye" width="13" height="9"/></svg>
<svg style="left:99px;top:308.0px" width="13" height="9"><use href="#eye" width="13" height="9"/></svg>
<svg style="left:99px;top:327.0px" width="13" height="9"><use href="#eye" width="13" height="9"/></svg>
<svg style="left:34px;top:112px" width="10" height="7"><path d="M0 0.500H9.500L4.750 6.500Z" fill="#f0f0f0"/></svg>
<svg style="left:46px;top:108.5px" width="18" height="12"><use href="#fopen" width="18" height="12"/></svg>
<span class="lbl lt" style="left:75.2px;top:108.5px;letter-spacing:-1.05px">ШАПКА</span>
<svg style="left:50px;top:135px" width="10" height="7"><path d="M0 0.500H9.500L4.750 6.500Z" fill="#f0f0f0"/></svg>
<svg style="left:62px;top:131.5px" width="18" height="12"><use href="#fopen" width="18" height="12"/></svg>
<span class="lbl lt" style="left:91.2px;top:131.5px;letter-spacing:-0.75px">Поисковая форма</span>
<svg style="left:64px;top:150px" width="37" height="37"><path d="M0.5 11V0.500H11M25 0.500H35.500V11M35.500 25V35.500H25M11 35.500H0.500V25" fill="none" stroke="#f4f4f4" stroke-width="1"/><text x="18" y="24.5" text-anchor="middle" font-family="Liberation Serif, serif" font-size="21" font-weight="bold" fill="url(#gT)">T</text></svg>
<span class="lbl lt" style="left:108.0px;top:162.5px;letter-spacing:-0.50px">Поиск</span>
<div class="a" style="left:66px;top:192px;width:32px;height:30px;background:#000"></div>
<div class="a" style="left:67px;top:193px;width:30px;height:28px;background:repeating-conic-gradient(#ccc 0% 25%,#fff 0% 50%) 0 0/8px 8px"></div>
<div class="a" style="left:84px;top:208px;width:14px;height:14px;background:#535353;border-left:1px solid #000;border-top:1px solid #000"></div>
<svg style="left:67px;top:193px" width="32" height="30"><ellipse cx="9.500" cy="11" rx="6.500" ry="7" fill="none" stroke="#555" stroke-width="2"/><use href="#shp" x="19" y="17" width="12" height="12"/></svg>
<span class="lbl lt" style="left:108.0px;top:202px;letter-spacing:-0.41px">Фигура 1</span>
<svg style="left:66px;top:238px" width="16" height="16"><path d="M0.5 16V0.5H16" fill="none" stroke="#000"/><path d="M1.5 15V1.5H15" fill="none" stroke="#fff"/><use href="#shp" x="3.5" y="3.5" width="12" height="12"/></svg>
<span class="lbl lt" style="left:92.0px;top:241px;letter-spacing:-0.74px">Поле ввода</span>
<span class="a" style="left:298px;top:238px;font-family:'Liberation Sans',sans-serif;font-style:italic;font-size:14px;color:#c8c8c8;letter-spacing:-0.5px">fx</span>
<div class="a" style="left:314px;top:227px;width:11px;height:38px;background:linear-gradient(#a6a6a6,#5c5c5c)"><i class="a tri-u" style="left:2px;top:17px;border-width:0 3.5px 4px 3.5px;border-bottom-color:#303030"></i></div>
<span class="lbl lt" style="left:100.7px;top:268.5px;letter-spacing:-0.82px">Эффекты</span>
<span class="lbl lt" style="left:118.0px;top:287.5px;letter-spacing:-0.50px">Выполнить обводку</span>
<span class="lbl lt" style="left:118.0px;top:306.5px;letter-spacing:-0.48px">Внутренняя тень</span>
<span class="lbl lt" style="left:118.0px;top:325.5px;letter-spacing:-0.62px">Наложение цвета</span>
<svg style="left:52px;top:349px" width="7" height="10"><path d="M0.500 0V9.500L6.500 4.750Z" fill="#f0f0f0"/></svg>
<svg style="left:63.5px;top:347.5px" width="15" height="12"><use href="#fclosed" width="15" height="12"/></svg>
<span class="lbl lt" style="left:91.0px;top:348px;letter-spacing:-0.56px">Строка Действий</span>
<svg style="left:52px;top:372px" width="7" height="10"><path d="M0.500 0V9.500L6.500 4.750Z" fill="#f0f0f0"/></svg>
<svg style="left:63.5px;top:370.5px" width="15" height="12"><use href="#fclosed" width="15" height="12"/></svg>
<span class="lbl lt" style="left:91.0px;top:371px;letter-spacing:-0.54px">Верхняя панель статусов</span>
<svg style="left:34px;top:397px" width="10" height="7"><path d="M0 0.500H9.500L4.750 6.500Z" fill="#f0f0f0"/></svg>
<svg style="left:46px;top:393.5px" width="18" height="12"><use href="#fopen" width="18" height="12"/></svg>
<span class="lbl lt" style="left:75.0px;top:394px;letter-spacing:-0.97px">КОНТЕНТ</span>
<svg style="left:34px;top:420px" width="10" height="7"><path d="M0 0.500H9.500L4.750 6.500Z" fill="#f0f0f0"/></svg>
<svg style="left:46px;top:416.5px" width="18" height="12"><use href="#fopen" width="18" height="12"/></svg>
<span class="lbl lt" style="left:75.0px;top:417px;letter-spacing:-0.98px">ПОДВАЛ</span>
<div class="a" style="left:34px;top:437px;width:32px;height:25px;background:#fff;border:1px solid #111"></div>
<span class="lbl lt" style="left:76.0px;top:443.5px;letter-spacing:-1.29px">ФОН</span>
<div class="a" id="lbot" style="top:632px"></div>
<svg style="left:135px;top:636px" width="180" height="16"><g fill="none" stroke="#7e7e7e" stroke-width="1.6"><rect x="2.800" y="4" width="8" height="6" rx="3"/><rect x="8.200" y="4" width="8" height="6" rx="3"/></g><text x="30" y="12.500" font-family="Liberation Sans, sans-serif" font-style="italic" font-size="15" fill="#a8a8a8" letter-spacing="-0.5">fx</text><path d="M44 12h4l-2 2z" fill="#a8a8a8"/><rect x="57" y="2" width="13" height="11" fill="#a8a8a8"/><circle cx="63.500" cy="7.500" r="3" fill="#484848"/><circle cx="90" cy="7" r="5" fill="none" stroke="#a8a8a8" stroke-width="1.3"/><path d="M86.500 10.500A5 5 0 0 1 93.500 3.500Z" fill="#a8a8a8"/><path d="M98 12h4l-2 2z" fill="#a8a8a8"/><path d="M111 2.500Q111 1.500 112 1.500H115.500Q116.500 1.500 116.500 2.500V3.500H122Q123 3.500 123 4.500V12H111Z" fill="#a8a8a8"/><path d="M139 2H149V12H144V7H139Z" fill="#a8a8a8"/><path d="M139.500 8L143 11.500" stroke="#a8a8a8" stroke-width="1"/><g fill="#a8a8a8"><rect x="165" y="3" width="11" height="1.500"/><rect x="168.500" y="1.500" width="4" height="1.500"/><path d="M166 5.500h9l-1 8h-7z"/></g><path d="M168.500 7v5M170.500 7v5M172.500 7v5" stroke="#484848" stroke-width="0.8"/></svg>
</div>
<div class="a" style="left:41px;top:726px;width:941px;height:1px;background:#626262"></div>
<!-- TASKBAR -->
<div id="taskbar" class="a">
<div class="a tbtn" style="left:64px;width:55px"></div>
<div class="a tbtn" style="left:60px;width:54px"></div>
<div class="a tbtn" style="left:122px;width:58px"></div>
<div class="a tbtn" style="left:184px;width:58px"></div>
<div class="a tbtn" style="left:246px;width:58px"></div>
<div class="a tbtn" style="left:308px;width:58px"></div>
<svg style="left:8px;top:1px" width="38" height="38" viewBox="0 0 38 38"><defs><radialGradient id="orb" cx="0.5" cy="0.98" r="0.75"><stop offset="0" stop-color="#12d6f6"/><stop offset="0.35" stop-color="#0c86c8"/><stop offset="0.7" stop-color="#0a5a9c"/><stop offset="1" stop-color="#0b4f8a"/></radialGradient><linearGradient id="orbh" x1="0" y1="0" x2="0" y2="1"><stop offset="0" stop-color="#eef4f8" stop-opacity="0.85"/><stop offset="1" stop-color="#c8d8e4" stop-opacity="0.42"/></linearGradient><linearGradient id="fr" x1="0" y1="0" x2="1" y2="1"><stop offset="0" stop-color="#e2401c"/><stop offset="1" stop-color="#fbb41c"/></linearGradient><linearGradient id="fg2" x1="0" y1="1" x2="1" y2="0"><stop offset="0" stop-color="#c4e070"/><stop offset="1" stop-color="#4ca030"/></linearGradient><linearGradient id="fb" x1="0" y1="1" x2="1" y2="0"><stop offset="0" stop-color="#1474c4"/><stop offset="1" stop-color="#8ccaf0"/></linearGradient><linearGradient id="fy" x1="0" y1="0" x2="1" y2="1"><stop offset="0" stop-color="#fde060"/><stop offset="1" stop-color="#f89a14"/></linearGradient></defs><circle cx="19" cy="19" r="18" fill="url(#orb)" stroke="#0d4a80" stroke-width="1"/><path d="M1.500 19A17.500 17.500 0 0 1 36.500 19Q28 16 19 17.500T1.500 19Z" fill="url(#orbh)"/><path d="M11.500 8.800Q16 7 20.700 9.300L19 17.800Q14.500 15.500 10 17.500Z" fill="url(#fr)"/><path d="M21.300 10.300Q26 13 31 10.500L29 19.300Q24.500 21.500 19.800 19Z" fill="url(#fg2)"/><path d="M9.500 18.800Q14 17 18.500 19L17 27Q12.500 25 7.500 27.200Z" fill="url(#fb)"/><path d="M19.300 20.200Q23.500 22.500 28.300 20.300L26.500 28.800Q22 31 17.300 28.500Z" fill="url(#fy)"/></svg>
<svg style="left:70px;top:4px" width="34" height="32" viewBox="0 0 34 32"><path d="M1.500 7Q1.500 5.500 3 5.500H11L13 8H22V27H1.500Z" fill="#f3dc8a" stroke="#c9a545"/><path d="M9 9.500Q9 8 10.500 8H17L19 10.500H26V27H9Z" fill="#f7e6a3" stroke="#c9a545"/><path d="M16 12Q16 10.500 17.500 10.500H24L26 13H31.500V27.500H16Z" fill="#f3dc8a" stroke="#c9a545"/><rect x="4" y="6.500" width="3" height="2" fill="#22b14c"/><rect x="12" y="9" width="3" height="2" fill="#d2322d"/><rect x="20" y="11.500" width="3" height="2" fill="#2f8be6"/><path d="M2 15H32V27.500H2Z" fill="#f5e29a" stroke="#d1ae52"/><path d="M5.500 31.500V23.500Q5.500 21 8 21H26Q28.500 21 28.500 23.500V31.500H22.500V26.500H11.500V31.500Z" fill="#8fd0f2" stroke="#3f97cf"/></svg>
<svg style="left:134px;top:6px" width="34" height="28" viewBox="0 0 34 28"><path d="M6 1L18 4L15 18L2 15Z" fill="#a9dd8f" stroke="#8cc872"/><path d="M8 6.500H21V22H8Z" fill="#a9d0f5" stroke="#86b6e6"/><path d="M13 9L28 4L33 19L18 25Z" fill="#f7e06b" stroke="#e2c64c"/></svg>
<svg style="left:199px;top:6px" width="28" height="28" viewBox="0 0 28 28"><circle cx="14" cy="14" r="13.500" fill="#dd4b3e"/><path d="M14 14L2.300 7.250A13.500 13.500 0 0 0 14 27.500Z" fill="#4aae48"/><path d="M14 14V27.500A13.500 13.500 0 0 0 25.700 7.250Z" fill="#fdd835"/><path d="M14 14L2.300 7.250A13.500 13.500 0 0 1 25.700 7.250Z" fill="#dd4b3e"/><path d="M14 14L20 24.400A13.500 13.500 0 0 0 25.700 7.250H14Z" fill="#fdd835"/><circle cx="14" cy="14" r="6.300" fill="#f4f4f4"/><circle cx="14" cy="14" r="5" fill="#4a8cd6"/></svg>
<svg style="left:259px;top:4px" width="30" height="30" viewBox="0 0 30 30"><path d="M0.500 4Q0.500 0.500 4 0.500H28.500V28.500H0.500Z" fill="#fff" stroke="#2b5fb0"/><path d="M1 1H28V14Q14 18 1 26Z" fill="#b9d2f2"/><path d="M10 16L29 19L27 29H3Z" fill="#f4f7fc" stroke="#c0cde0" stroke-width="0.600"/><text x="14.500" y="20.500" text-anchor="middle" font-family="Liberation Sans, sans-serif" font-weight="bold" font-size="21" fill="#1b5cbe" stroke="#1b5cbe" stroke-width="0.700">W</text></svg>
<svg style="left:322px;top:4px" width="30" height="30" viewBox="0 0 30 30"><rect x="1" y="1" width="28" height="28" fill="#1d1a5c" stroke="#82b3ef" stroke-width="2"/><text x="15" y="21" text-anchor="middle" font-family="Liberation Sans, sans-serif" font-weight="bold" font-size="16" fill="#8ab9f5">Ps</text></svg>
<span class="a" style="left:909.0px;top:11px;font-size:12px;color:#fff;letter-spacing:-0.87px">RU</span>
<svg style="left:0;top:0" width="1366" height="40"><g transform="translate(939.5,13)"><rect x="0.500" y="0.500" width="15" height="15" rx="3" fill="#f08a1c" stroke="#3a2a1a"/><rect x="4.500" y="4" width="2.500" height="8" fill="#fff"/><rect x="9" y="4" width="2.500" height="8" fill="#fff"/></g><g transform="translate(963.5,13)"><circle cx="8" cy="8" r="7" fill="#1d1d1d" stroke="#e89a1c" stroke-width="1.800"/><path d="M8 4L12 11H4Z" fill="#f0a020"/><path d="M8 7.500L9.500 10H6.500Z" fill="#1d1d1d"/></g><g transform="translate(988.5,13)"><rect x="1" y="0" width="6" height="13" rx="1" fill="#2a2a2a" stroke="#555"/><rect x="2" y="1.500" width="4" height="8" fill="#3b8de0"/><circle cx="10.500" cy="10" r="5" fill="#1f55b5" stroke="#123a85"/><path d="M8 9l2.500-2l2.500 2l-2.500 3z" fill="#e8f0ff"/></g><g transform="translate(1012,13)"><path d="M4 4L15 1L13 10L2 12Z" fill="#3c3c3c" stroke="#222"/><rect x="1" y="8" width="4" height="7" fill="#f2f2f2" stroke="#9a5ab8"/><path d="M2 13l2-3" stroke="#a040c0"/></g><g transform="translate(1036,13)"><rect x="2" y="1" width="12" height="9" fill="#f4f4f4" stroke="#c9c9c9"/><path d="M0 12.500H16" stroke="#c0c0c0" stroke-width="1.500"/><circle cx="8" cy="5.500" r="2.500" fill="none" stroke="#f08a1c" stroke-width="1.500" stroke-dasharray="5 2"/></g><g transform="translate(1060,13)"><rect x="0" y="0" width="16" height="16" rx="2" fill="#2fc32f" stroke="#1a8f1a"/><path d="M3 6H11V4L14 6.500L11 9V7.500H3ZM13 10.500H5V12.500L2 10L5 7.500V9H13Z" fill="#fff" transform="translate(0,-0.200)"/></g><g transform="translate(1084,13)"><circle cx="8" cy="8" r="7.500" fill="#e4e4e4" stroke="#b4b4b4"/><rect x="3.500" y="9" width="2" height="3" fill="#666"/><rect x="6.300" y="7.500" width="2" height="4.500" fill="#666"/><rect x="9" y="6" width="2" height="6" fill="#666"/><rect x="11.700" y="4.500" width="2" height="7.500" fill="#666"/></g><g transform="translate(1108,13)"><rect x="1.500" y="1" width="13" height="9" fill="#7a7a7a" stroke="#111"/><path d="M7 2h7v7z" fill="#bdbdbd"/><rect x="0.500" y="11" width="15" height="4" rx="1" fill="#f0f0f0" stroke="#111"/><path d="M8 11v4" stroke="#111"/></g><g transform="translate(1132,13)"><path d="M1 6L5 3H15L12 6Z" fill="#f0f0f0" stroke="#b0b0b0"/><rect x="1" y="6" width="11" height="6" fill="#dcdcdc" stroke="#a8a8a8"/><path d="M5 9.500L8 13L15 5.500" fill="none" stroke="#2fae2f" stroke-width="2.600"/></g><g transform="translate(1156,13)"><path d="M2.500 1V15" stroke="#f4f4f4" stroke-width="1.600"/><path d="M3.500 1.500Q7 0 9 2T14 2V9Q11 10.500 9 9T3.500 9Z" fill="#f4f4f4" stroke="#9a9a9a" stroke-width="0.600"/><circle cx="11" cy="11.500" r="4.300" fill="#d42020" stroke="#fff" stroke-width="0.800"/><path d="M9 9.500l4 4M13 9.500l-4 4" stroke="#fff" stroke-width="1.500"/></g><g transform="translate(1180,13)"><rect x="0" y="2" width="16" height="12" fill="#e01010"/><text x="8" y="12" text-anchor="middle" font-family="Liberation Sans, sans-serif" font-weight="bold" font-style="italic" font-size="9" fill="#fff">ATI</text></g><g transform="translate(1204,13)"><rect x="2" y="1" width="8" height="13" rx="1.500" fill="#8a8a8a" stroke="#444"/><path d="M8 3h6v2h-1v3q0 2-2 2v3h-1v-3q-2 0-2-2v-3h-1z" fill="#f6f6f6" stroke="#555" stroke-width="0.600"/><path d="M3 9l5 6M8 9l-5 6" stroke="#e01010" stroke-width="1.800"/></g><g transform="translate(1228,13)" fill="#f4f4f4" stroke="#777" stroke-width="0.500"><rect x="0.500" y="12" width="2.400" height="3"/><rect x="3.700" y="9.500" width="2.400" height="5.500"/><rect x="6.900" y="7" width="2.400" height="8"/><rect x="10.100" y="4" width="2.400" height="11"/><rect x="13.300" y="1" width="2.400" height="14"/></g><g transform="translate(1252,13)"><path d="M1 5.500H4L8 2V14L4 10.500H1Z" fill="#f4f4f4" stroke="#777" stroke-width="0.600"/><path d="M10 5.500Q11.500 8 10 10.500M12 3.500Q14.500 8 12 12.500M14 2Q17.500 8 14 14" fill="none" stroke="#f4f4f4" stroke-width="1.100"/></g></svg>
<span class="a clk" style="left:1299.0px;top:6px;letter-spacing:-0.41px">15:42</span><span class="a clk" style="left:1285.7px;top:22px;letter-spacing:-0.64px">18.01.2015</span>
<div class="a" id="showdesk"></div>
</div>
</body>
</html>
